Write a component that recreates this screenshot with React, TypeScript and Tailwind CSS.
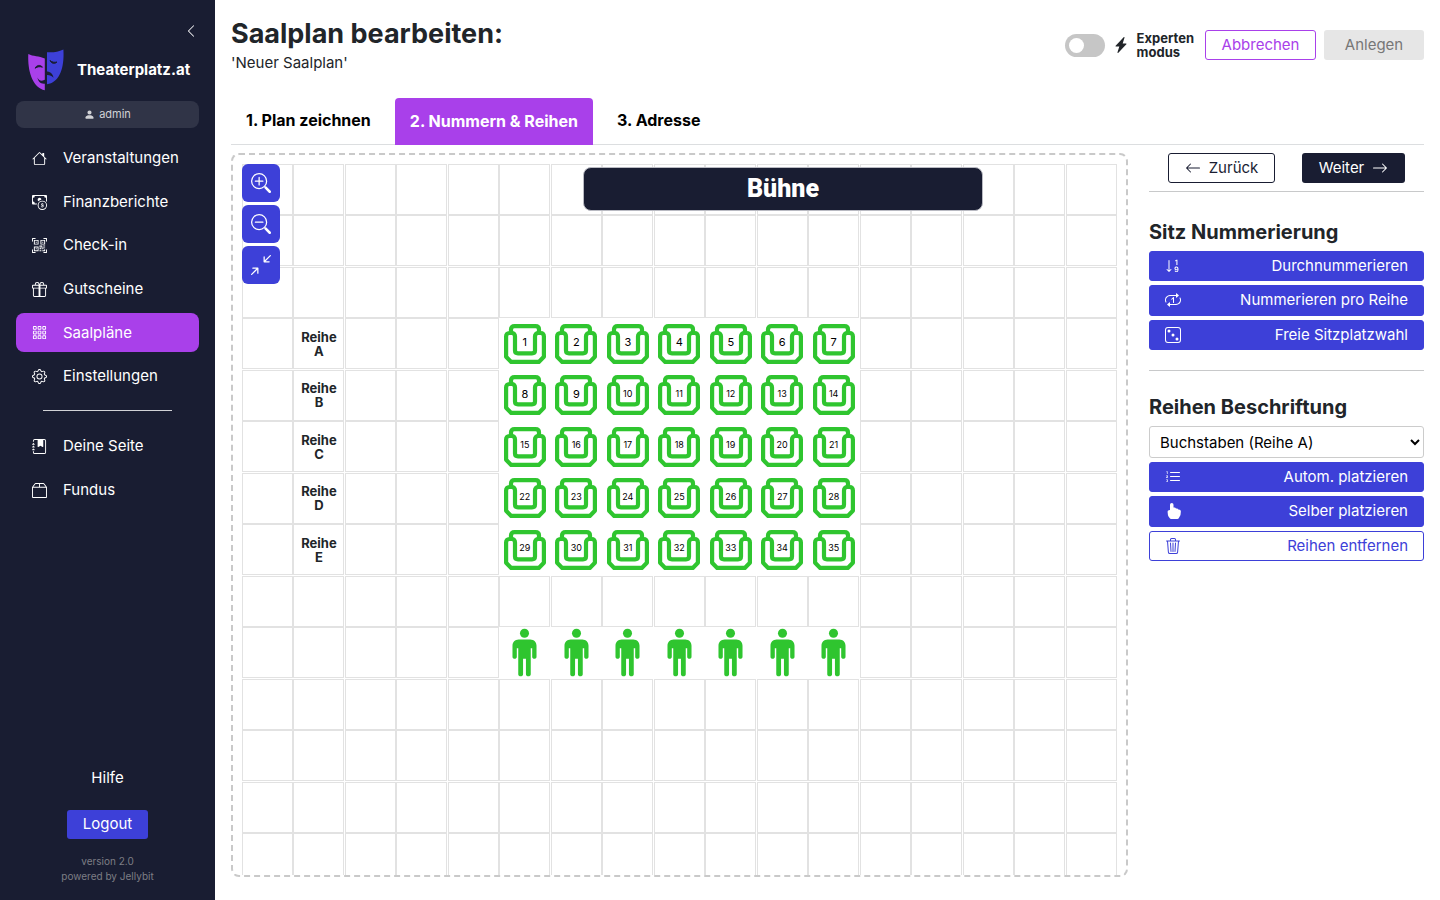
import type { ReactNode } from 'react'
import type { IconType } from 'react-icons'
import {
  BsArrowLeft,
  BsArrowRight,
  BsArrowsAngleContract,
  BsBox2,
  BsCashCoin,
  BsChevronLeft,
  BsDice3,
  BsGear,
  BsGift,
  BsGrid3X3Gap,
  BsHandIndexFill,
  BsHouse,
  BsJournalBookmarkFill,
  BsLightningChargeFill,
  BsListOl,
  BsPersonFill,
  BsQrCodeScan,
  BsRepeat1,
  BsSortNumericDown,
  BsTrash3,
  BsZoomIn,
  BsZoomOut,
} from 'react-icons/bs'

const COLS = 17
const ROWS = 14
const FIRST_SEAT_COL = 5
const SEATS_PER_ROW = 7
const FIRST_SEAT_ROW = 3
const SEAT_ROWS = ['A', 'B', 'C', 'D', 'E']
const STANDING_ROW = 9

interface NavEntry {
  label: string
  icon: IconType
  active?: boolean
}

const mainNav: NavEntry[] = [
  { label: 'Veranstaltungen', icon: BsHouse },
  { label: 'Finanzberichte', icon: BsCashCoin },
  { label: 'Check-in', icon: BsQrCodeScan },
  { label: 'Gutscheine', icon: BsGift },
  { label: 'Saalpläne', icon: BsGrid3X3Gap, active: true },
  { label: 'Einstellungen', icon: BsGear },
]

const secondaryNav: NavEntry[] = [
  { label: 'Deine Seite', icon: BsJournalBookmarkFill },
  { label: 'Fundus', icon: BsBox2 },
]

function Logo() {
  return (
    <svg viewBox="0 0 36 42" className="h-[42px] w-9 shrink-0" aria-hidden="true">
      <path d="M.3 5C5 7.6 11 6.800 16.800 9.500V41.300C5 38.500-.6 23 .3 5Z" fill="#a940ea" />
      <path d="M19 3.200C25 3.800 30 2.800 35.400.5C36.500 18 32 33.500 19 35.200Z" fill="#3d40d8" />
      <path d="M7.200 19.200C8.500 15.800 12.500 15.600 14.500 18.200C12 17.300 9.500 17.600 7.200 19.200Z" fill="#191d32" stroke="#191d32" />
      <path d="M9.500 28.500C11 32 14 32.500 17.500 30.500V34.500C13 35.500 10 32.500 9.500 28.500Z" fill="#191d32" />
      <path d="M22 11.500C23.500 14.800 27 15.200 29 13C26.500 13.600 24 13.300 22 11.500Z" fill="#191d32" stroke="#191d32" />
      <path d="M18.500 22.500C22.500 22.500 25 25 25.500 28.800C23.500 26.500 21.500 25.800 18.500 26Z" fill="#191d32" />
    </svg>
  )
}

function NavItem({ label, icon: Icon, active }: NavEntry) {
  return (
    <a
      href="#"
      className={`flex h-[39px] items-center gap-4 rounded-lg pl-4 text-[15px] text-white ${
        active ? 'bg-[#a940ea]' : ''
      }`}
    >
      <Icon size={15} className="shrink-0" />
      {label}
    </a>
  )
}

function Sidebar() {
  return (
    <aside className="flex w-[215px] shrink-0 flex-col bg-[#191d32] px-4 text-white">
      <button aria-label="Menü einklappen" className="mt-6 mr-px self-end">
        <BsChevronLeft size={14} />
      </button>
      <div className="mt-[11px] ml-3 flex items-center gap-[13px]">
        <Logo />
        <span className="text-[15px] leading-6 font-bold">Theaterplatz.at</span>
      </div>
      <div className="mt-[10px] flex h-[27px] items-center justify-center gap-1 rounded-lg bg-[#303447] text-[11px] text-[#d1d2d6]">
        <BsPersonFill size={11} />
        admin
      </div>
      <nav className="mt-[11px]">
        <div className="flex h-[257px] flex-col justify-between">
          {mainNav.map(entry => (
            <NavItem key={entry.label} {...entry} />
          ))}
        </div>
        <hr className="mx-[27px] mt-[14px] mb-4 border-[#d1d2d6]" />
        <div className="flex h-[83px] flex-col justify-between">
          {secondaryNav.map(entry => (
            <NavItem key={entry.label} {...entry} />
          ))}
        </div>
      </nav>
      <div className="mt-auto flex flex-col items-center pb-4">
        <a href="#" className="text-[15px] leading-5">
          Hilfe
        </a>
        <button className="mt-[22px] h-[29px] rounded-[3px] bg-[#3d40d8] px-4 text-[15px]">Logout</button>
        <p className="mt-[15px] text-center text-[10px] leading-[15px] text-[#7d7e85]">
          version 2.0
          <br />
          powered by Jellybit
        </p>
      </div>
    </aside>
  )
}

function Header() {
  return (
    <header className="flex items-start justify-between pt-4">
      <div className="text-[#212529]">
        <h1 className="text-[27px] leading-9 font-bold">Saalplan bearbeiten:</h1>
        <p className="text-[15px] leading-[22px]">'Neuer Saalplan'</p>
      </div>
      <div className="flex items-center pt-[14px]">
        <input
          id="expert"
          type="checkbox"
          className="h-[23px] w-10 appearance-none rounded-full bg-[#c6c6c6] p-1 before:block before:size-[15px] before:rounded-full before:bg-white"
        />
        <label htmlFor="expert" className="ml-2 flex items-center gap-2 text-[13px] leading-[14px] font-bold text-[#212529]">
          <BsLightningChargeFill size={16} />
          <span>
            Experten
            <br />
            modus
          </span>
        </label>
        <button className="ml-[11px] h-[30px] w-[111px] rounded-[3px] border border-[#a940ea] text-[15px] text-[#a940ea]">
          Abbrechen
        </button>
        <button disabled className="ml-2 h-[30px] w-[100px] rounded-[3px] bg-[#e6e6e6] text-[15px] text-[#777]">
          Anlegen
        </button>
      </div>
    </header>
  )
}

function Tabs() {
  const tab = 'rounded-t px-[15px] pb-[2px] text-base font-bold'
  return (
    <div className="mt-6 flex gap-[9px] border-b border-[#dcdee0]">
      <button className={`${tab} h-[46px] text-black`}>1. Plan zeichnen</button>
      <button className={`${tab} -mb-px h-[47px] bg-[#a940ea] text-white`}>2. Nummern &amp; Reihen</button>
      <button className={`${tab} h-[46px] text-black`}>3. Adresse</button>
    </div>
  )
}

function Seat({ number }: { number: number }) {
  return (
    <div className="relative flex size-full items-center justify-center">
      <svg viewBox="0 0 42 40" className="h-10 w-[42px]" fill="none" stroke="#2fc52f" strokeWidth="4.200" aria-hidden="true">
        <path d="M7 10V5.500Q7 2.100 10.500 2.100H31.500Q35 2.100 35 5.500V10" />
        <path
          d="M2.100 12.500Q2.100 9 5.500 9H7.500Q11 9 11 12.500V26.500Q11 29.300 14 29.300H28Q31 29.300 31 26.500V12.500Q31 9 34.500 9H36.500Q39.900 9 39.900 12.500V32.800L34.800 37.900H7.200L2.100 32.800Z"
          strokeLinejoin="round"
        />
      </svg>
      <span
        className={`absolute inset-0 flex items-center justify-center pb-[3px] text-black ${
          number < 10 ? 'text-[11px]' : 'text-[9px]'
        }`}
      >
        {number}
      </span>
    </div>
  )
}

function StandingPlace() {
  return (
    <svg viewBox="0 0 26 50" className="h-[49px] w-[25px]" fill="#2fc52f" aria-hidden="true">
      <circle cx="13" cy="5" r="4.700" />
      <path d="M7 11.500H19C23 11.500 25.500 14.500 25.500 18V29.500C25.500 32.300 21 32.300 21 29.500V20.500H19.500V47.500C19.500 50.500 14.500 50.500 14.500 47.500V31.500H11.500V47.500C11.500 50.500 6.500 50.500 6.500 47.500V20.500H5V29.500C5 32.300 .5 32.300 .5 29.500V18C.5 14.500 3 11.500 7 11.500Z" />
    </svg>
  )
}

function Cell({ row, col }: { row: number; col: number }) {
  const seatRow = row - FIRST_SEAT_ROW
  const seatCol = col - FIRST_SEAT_COL
  const inSeatRow = seatRow >= 0 && seatRow < SEAT_ROWS.length
  const inSeatCol = seatCol >= 0 && seatCol < SEATS_PER_ROW

  let content: ReactNode = null
  let bordered = true
  if (inSeatRow && inSeatCol) {
    content = <Seat number={seatRow * SEATS_PER_ROW + seatCol + 1} />
    bordered = false
  } else if (row === STANDING_ROW && inSeatCol) {
    content = <StandingPlace />
    bordered = false
  } else if (inSeatRow && col === 1) {
    content = (
      <>
        Reihe
        <br />
        {SEAT_ROWS[seatRow]}
      </>
    )
  }

  return (
    <div className="aspect-square">
      <div
        className={`flex aspect-square max-w-[51px] items-center justify-center text-center text-[13px] leading-[14px] ${
          bordered ? 'border border-[#e2e2e2] font-bold' : 'font-normal'
        }`}
      >
        {content && <div>{content}</div>}
      </div>
    </div>
  )
}

function Plan() {
  const cells = Array.from({ length: ROWS * COLS }, (_, i) => ({ row: Math.floor(i / COLS), col: i % COLS }))
  const tool = 'flex size-[38px] items-center justify-center rounded-md bg-[#3d40d8] text-white'
  return (
    <section className="relative min-w-0 flex-1 overflow-hidden rounded-lg border-2 border-dashed border-[#c9c9c9] p-[9px]">
      <div className="grid grid-cols-[repeat(17,minmax(0,1fr))] text-[#212529]">
        {cells.map(({ row, col }) => (
          <Cell key={`${row}-${col}`} row={row} col={col} />
        ))}
      </div>
      <div className="absolute top-3 left-[350px] flex h-11 w-[400px] items-center justify-center rounded-lg border border-[#b9bac2] bg-[#191d32] font-['Roboto',sans-serif] text-[25px] font-black text-white">
        Bühne
      </div>
      <div className="absolute top-[9px] left-[9px] flex flex-col gap-[3px]">
        <button aria-label="Vergrößern" className={tool}>
          <BsZoomIn size={20} />
        </button>
        <button aria-label="Verkleinern" className={tool}>
          <BsZoomOut size={20} />
        </button>
        <button aria-label="Einpassen" className={tool}>
          <BsArrowsAngleContract size={20} />
        </button>
      </div>
    </section>
  )
}

function ActionButton({ icon: Icon, label, outline }: { icon: IconType; label: string; outline?: boolean }) {
  return (
    <button
      className={`flex flex-1 items-center justify-between rounded-[3px] border border-[#3d40d8] px-[15px] text-[15px] ${
        outline ? 'bg-white text-[#3d40d8]' : 'bg-[#3d40d8] text-white'
      }`}
    >
      <Icon size={16} />
      {label}
    </button>
  )
}

function SidePanel() {
  return (
    <aside className="w-[275px] shrink-0 text-[#212529]">
      <div className="flex items-center justify-between border-b border-[#c8c9ca] px-[19px] pb-2">
        <button className="flex h-[30px] w-[107px] items-center justify-center gap-2 rounded-[3px] border border-[#191d32] text-[15px] text-[#191d32]">
          <BsArrowLeft size={16} />
          Zurück
        </button>
        <button className="flex h-[30px] w-[103px] items-center justify-center gap-2 rounded-[3px] bg-[#191d32] text-[15px] text-white">
          Weiter
          <BsArrowRight size={16} />
        </button>
      </div>
      <h2 className="mt-7 text-xl leading-6 font-bold">Sitz Nummerierung</h2>
      <div className="mt-[7px] flex h-[99px] flex-col gap-1">
        <ActionButton icon={BsSortNumericDown} label="Durchnummerieren" />
        <ActionButton icon={BsRepeat1} label="Nummerieren pro Reihe" />
        <ActionButton icon={BsDice3} label="Freie Sitzplatzwahl" />
      </div>
      <hr className="mt-5 border-[#c8c9ca]" />
      <h2 id="row-labels" className="mt-6 text-xl leading-6 font-bold">
        Reihen Beschriftung
      </h2>
      <select
        aria-labelledby="row-labels"
        className="mt-[7px] block h-8 w-full rounded-[3px] border border-[#ccc] bg-white pl-[6px] text-[15px] text-black"
      >
        <option>Buchstaben (Reihe A)</option>
      </select>
      <div className="mt-1 flex h-[99px] flex-col gap-1">
        <ActionButton icon={BsListOl} label="Autom. platzieren" />
        <ActionButton icon={BsHandIndexFill} label="Selber platzieren" />
        <ActionButton icon={BsTrash3} label="Reihen entfernen" outline />
      </div>
    </aside>
  )
}

export default function App() {
  return (
    <div className="flex h-screen bg-white font-['Inter',sans-serif]">
      <Sidebar />
      <main className="flex min-w-0 flex-1 flex-col px-4 pb-[23px]">
        <Header />
        <Tabs />
        <div className="mt-2 flex min-h-0 flex-1 gap-[21px]">
          <Plan />
          <SidePanel />
        </div>
      </main>
    </div>
  )
}
